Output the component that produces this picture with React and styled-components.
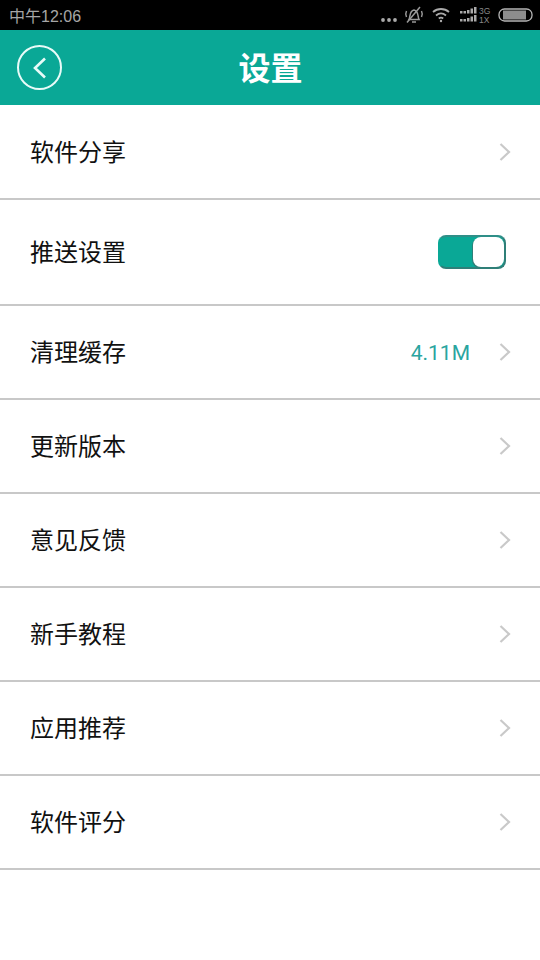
import styled, { createGlobalStyle } from "styled-components";

const GlobalStyle = createGlobalStyle`
    html, body {
        margin: 0;
        padding: 0;
        background: #fff;
    }
    * {
        box-sizing: border-box;
    }
`;

const Page = styled.div`
    width: 540px;
    height: 960px;
    background: #fff;
    overflow: hidden;
    font-family: "Noto Sans CJK SC", sans-serif;
`;

const StatusBar = styled.div`
    height: 30px;
    background: #000;
    display: flex;
    align-items: center;
    justify-content: space-between;
    padding: 0 7px 0 9px;
`;

const Clock = styled.span`
    font-family: "Liberation Sans", "Noto Sans CJK SC", sans-serif;
    font-size: 16px;
    color: #a6a6a6;
`;

const StatusIcons = styled.div`
    display: flex;
    align-items: center;
    gap: 6px;
`;

const WifiSvg = styled.svg`
    margin: 0 4px 0 2px;
`;

const Header = styled.div`
    height: 75px;
    background: #0aa896;
    display: flex;
    align-items: center;
    padding-left: 17px;
`;

const BackButton = styled.div`
    width: 45px;
    height: 45px;
    border: 2px solid #e8fbf8;
    border-radius: 50%;
    display: flex;
    align-items: center;
    justify-content: center;
    padding-right: 2px;
`;

const Title = styled.h1`
    flex: 1;
    margin: 0 0 0 -30px;
    text-align: center;
    color: #fff;
    font-size: 32px;
    font-weight: 700;
    line-height: 1;
    padding: 0 31px 4px 0;
`;

const Row = styled.div`
    height: ${props => props.$height}px;
    border-bottom: 2px solid #c8c8c8;
    display: flex;
    align-items: center;
    padding: 0 29px 0 30px;
`;

const Label = styled.span`
    flex: 1;
    font-size: 24px;
    color: #111;
    padding-bottom: 3px;
`;

const Value = styled.span`
    font-family: Roboto, sans-serif;
    font-size: 21px;
    color: #2aa5a0;
    margin: 2px 29px 0 0;
`;

const Toggle = styled.div`
    width: 68px;
    height: 34px;
    background: #0aa896;
    border: 2px solid #2f7f78;
    border-left-color: #0aa896;
    border-top-color: #2f8f88;
    border-radius: 8px;
    display: flex;
    justify-content: flex-end;
    margin-right: 5px;
`;

const Knob = styled.div`
    width: 31px;
    height: 30px;
    background: #fff;
    border-radius: 8px;
    box-shadow: -1px 1px 0 #2f7f78;
`;

const Chevron = () => (
    <svg width="12" height="20" viewBox="0 0 12 20">
        <path d="M1.5 2 L10 10 L1.5 18" fill="none" stroke="#c9c9c9" strokeWidth="2.2" />
    </svg>
);

const MuteIcon = () => (
    <svg width="20" height="20" viewBox="0 0 20 20" fill="none" stroke="#999" strokeWidth="1.5">
        <path d="M5 14.5 C6.5 12 5 6 10 5 C15 6 13.5 12 15 14.5 Z" />
        <path d="M8 17 H12" />
        <path d="M3 17.5 L16 2" />
        <path d="M2.5 6 C1.5 8 1.5 10 2.5 12" />
        <path d="M17.5 6 C18.5 8 18.5 10 17.5 12" />
    </svg>
);

const WifiIcon = () => (
    <WifiSvg width="18" height="16" viewBox="0 0 18 16" fill="none" stroke="#aaa" strokeWidth="1.8">
        <path d="M1 5 C5.5 1 12.5 1 17 5" />
        <path d="M4 8.5 C7 6 11 6 14 8.5" />
        <path d="M6.8 11.5 C8 10.5 10 10.5 11.2 11.5" />
        <circle cx="9" cy="14" r="1.2" fill="#aaa" stroke="none" />
    </WifiSvg>
);

const SignalIcon = () => (
    <svg width="32" height="18" viewBox="0 0 32 18" fill="#aaa">
        <rect x="0" y="5" width="2.5" height="2.5" />
        <rect x="3.5" y="5" width="2.5" height="2.5" />
        <rect x="7" y="4" width="2.5" height="3.5" />
        <rect x="10.5" y="2.5" width="2.5" height="5" />
        <rect x="14" y="1" width="2.5" height="6.5" />
        <rect x="0" y="13" width="2.5" height="2.5" />
        <rect x="3.5" y="13" width="2.5" height="2.5" />
        <rect x="7" y="12" width="2.5" height="3.5" />
        <rect x="10.5" y="10.5" width="2.5" height="5" />
        <rect x="14" y="9" width="2.5" height="6.5" />
        <text x="19" y="7.5" fontSize="8.5" fontFamily="Liberation Sans" fill="#888">3G</text>
        <text x="19" y="16.5" fontSize="8.5" fontFamily="Liberation Sans" fill="#888">1X</text>
    </svg>
);

const BatteryIcon = () => (
    <svg width="35" height="14" viewBox="0 0 35 14">
        <rect x="1" y="1" width="33" height="12" rx="5.5" fill="none" stroke="#b5b5b5" strokeWidth="1.3" />
        <rect x="5" y="2.5" width="23" height="9" fill="#8d8d8d" />
    </svg>
);

const DotsIcon = () => (
    <svg width="18" height="20" viewBox="0 0 18 20" fill="#aaa">
        <circle cx="3" cy="15" r="1.9" />
        <circle cx="9" cy="15" r="1.9" />
        <circle cx="15" cy="15" r="1.9" />
    </svg>
);

const rows = [
    { label: "软件分享", height: 95 },
    { label: "推送设置", height: 106, toggle: true },
    { label: "清理缓存", height: 94, value: "4.11M" },
    { label: "更新版本", height: 94 },
    { label: "意见反馈", height: 94 },
    { label: "新手教程", height: 94 },
    { label: "应用推荐", height: 94 },
    { label: "软件评分", height: 94 },
];

export default function App() {
    return (
        <Page>
            <GlobalStyle />
            <StatusBar>
                <Clock>中午12:06</Clock>
                <StatusIcons>
                    <DotsIcon />
                    <MuteIcon />
                    <WifiIcon />
                    <SignalIcon />
                    <BatteryIcon />
                </StatusIcons>
            </StatusBar>
            <Header>
                <BackButton>
                    <svg width="16" height="24" viewBox="0 0 16 24">
                        <path d="M14 2.5 L4 12 L14 21.5" fill="none" stroke="#e8fbf8" strokeWidth="2.6" />
                    </svg>
                </BackButton>
                <Title>设置</Title>
            </Header>
            {rows.map(row => (
                <Row key={row.label} $height={row.height}>
                    <Label>{row.label}</Label>
                    {row.value && <Value>{row.value}</Value>}
                    {row.toggle ? (
                        <Toggle>
                            <Knob />
                        </Toggle>
                    ) : (
                        <Chevron />
                    )}
                </Row>
            ))}
        </Page>
    );
}
